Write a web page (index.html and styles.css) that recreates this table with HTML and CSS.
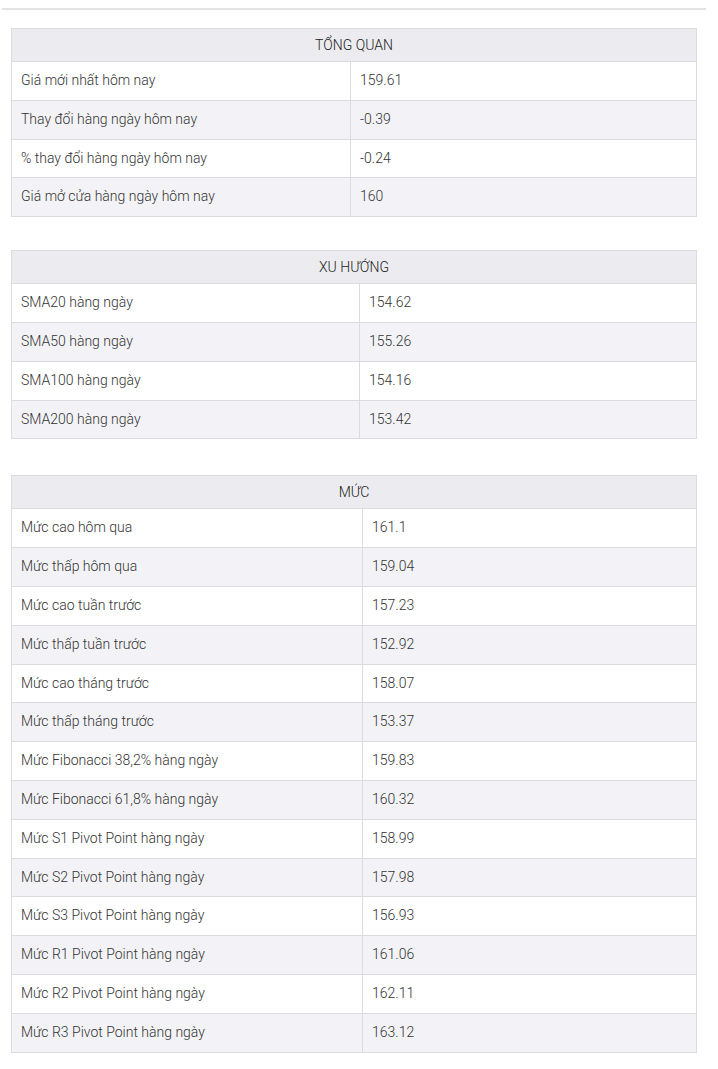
FILE: index.html
```
<!DOCTYPE html>
<html lang="vi">
<head>
<meta charset="utf-8">
<link rel="stylesheet" href="styles.css">
</head>
<body>
<div class="rule"></div>
<table class="data t1">
  <colgroup><col class="c-label"><col></colgroup>
  <thead><tr><th colspan="2">TỔNG QUAN</th></tr></thead>
  <tbody>
    <tr><td>Giá mới nhất hôm nay</td><td>159.61</td></tr>
    <tr><td>Thay đổi hàng ngày hôm nay</td><td>-0.39</td></tr>
    <tr><td>% thay đổi hàng ngày hôm nay</td><td>-0.24</td></tr>
    <tr><td>Giá mở cửa hàng ngày hôm nay</td><td>160</td></tr>
  </tbody>
</table>
<table class="data t2">
  <colgroup><col class="c-label"><col></colgroup>
  <thead><tr><th colspan="2">XU HƯỚNG</th></tr></thead>
  <tbody>
    <tr><td>SMA20 hàng ngày</td><td>154.62</td></tr>
    <tr><td>SMA50 hàng ngày</td><td>155.26</td></tr>
    <tr><td>SMA100 hàng ngày</td><td>154.16</td></tr>
    <tr><td>SMA200 hàng ngày</td><td>153.42</td></tr>
  </tbody>
</table>
<table class="data t3">
  <colgroup><col class="c-label"><col></colgroup>
  <thead><tr><th colspan="2">MỨC</th></tr></thead>
  <tbody>
    <tr><td>Mức cao hôm qua</td><td>161.1</td></tr>
    <tr><td>Mức thấp hôm qua</td><td>159.04</td></tr>
    <tr><td>Mức cao tuần trước</td><td>157.23</td></tr>
    <tr><td>Mức thấp tuần trước</td><td>152.92</td></tr>
    <tr><td>Mức cao tháng trước</td><td>158.07</td></tr>
    <tr><td>Mức thấp tháng trước</td><td>153.37</td></tr>
    <tr><td>Mức Fibonacci 38,2% hàng ngày</td><td>159.83</td></tr>
    <tr><td>Mức Fibonacci 61,8% hàng ngày</td><td>160.32</td></tr>
    <tr><td>Mức S1 Pivot Point hàng ngày</td><td>158.99</td></tr>
    <tr><td>Mức S2 Pivot Point hàng ngày</td><td>157.98</td></tr>
    <tr><td>Mức S3 Pivot Point hàng ngày</td><td>156.93</td></tr>
    <tr><td>Mức R1 Pivot Point hàng ngày</td><td>161.06</td></tr>
    <tr><td>Mức R2 Pivot Point hàng ngày</td><td>162.11</td></tr>
    <tr><td>Mức R3 Pivot Point hàng ngày</td><td>163.12</td></tr>
  </tbody>
</table>
</body>
</html>
```
FILE: styles.css
```
html, body {
  margin: 0;
  padding: 0;
  background: #ffffff;
}
body {
  font-family: Roboto, "Liberation Sans", sans-serif;
  font-size: 14px;
  font-weight: 300;
  color: #333333;
}
.rule {
  margin: 8px 12px 0 2px;
  height: 2px;
  background: #e3e3e3;
}
.data {
  border-collapse: collapse;
  width: 686px;
  margin-left: 11px;
  table-layout: fixed;
}
.t1 { margin-top: 18px; margin-bottom: 33px; }
.t2 { margin-bottom: 36px; }
.data th {
  background: #ececf0;
  color: #1a1a1a;
  font-weight: 300;
  text-align: center;
  padding: 8px 10px;
  line-height: 16px;
  border: 1px solid #dcdce0;
}
.data td {
  padding: 10px 10px 10px 9px;
  line-height: 17.8px;
  border: 1px solid #dcdce0;
  text-align: left;
}
.data tbody tr:nth-child(even) td {
  background: #f3f3f7;
}
.t1 .c-label { width: 339px; }
.t2 .c-label { width: 348px; }
.t3 .c-label { width: 351px; }
```
